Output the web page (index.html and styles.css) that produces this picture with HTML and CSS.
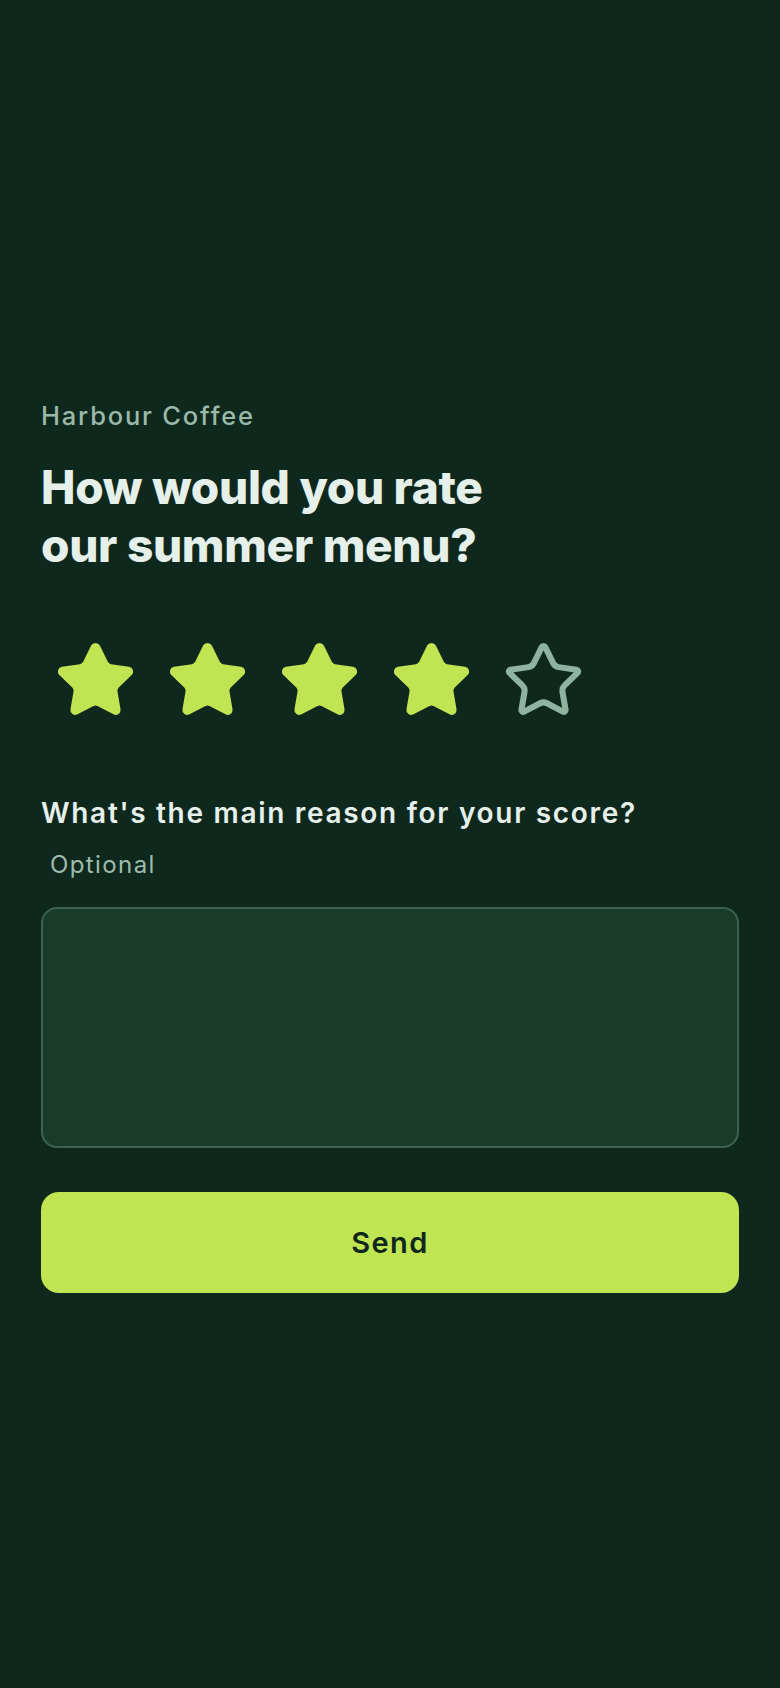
FILE: index.html
```html
<!DOCTYPE html>
<html lang="en">
<head>
<meta charset="utf-8">
<meta name="viewport" content="width=device-width, initial-scale=1">
<title>Harbour Coffee – Rate our summer menu</title>
<link rel="stylesheet" href="styles.css">
</head>
<body>
<main class="screen">
  <section class="survey">
    <p class="brand">Harbour Coffee</p>
    <h1 class="question">How would you rate<br>our summer menu?</h1>

    <div class="stars" role="radiogroup" aria-label="Rating">
      <button class="star is-on" aria-label="1 star"><svg viewBox="0 0 24 24"><path d="M11.525 2.295a.53.53 0 0 1 .95 0l2.31 4.679a2.123 2.123 0 0 0 1.595 1.16l5.166.756a.53.53 0 0 1 .294.904l-3.736 3.638a2.123 2.123 0 0 0-.611 1.878l.882 5.14a.53.53 0 0 1-.771.56l-4.618-2.428a2.122 2.122 0 0 0-1.973 0L6.396 21.01a.53.53 0 0 1-.77-.56l.881-5.139a2.122 2.122 0 0 0-.611-1.879L2.16 9.795a.53.53 0 0 1 .294-.906l5.165-.755a2.122 2.122 0 0 0 1.597-1.16z"/></svg></button>
      <button class="star is-on" aria-label="2 stars"><svg viewBox="0 0 24 24"><path d="M11.525 2.295a.53.53 0 0 1 .95 0l2.31 4.679a2.123 2.123 0 0 0 1.595 1.16l5.166.756a.53.53 0 0 1 .294.904l-3.736 3.638a2.123 2.123 0 0 0-.611 1.878l.882 5.14a.53.53 0 0 1-.771.56l-4.618-2.428a2.122 2.122 0 0 0-1.973 0L6.396 21.01a.53.53 0 0 1-.77-.56l.881-5.139a2.122 2.122 0 0 0-.611-1.879L2.16 9.795a.53.53 0 0 1 .294-.906l5.165-.755a2.122 2.122 0 0 0 1.597-1.16z"/></svg></button>
      <button class="star is-on" aria-label="3 stars"><svg viewBox="0 0 24 24"><path d="M11.525 2.295a.53.53 0 0 1 .95 0l2.31 4.679a2.123 2.123 0 0 0 1.595 1.16l5.166.756a.53.53 0 0 1 .294.904l-3.736 3.638a2.123 2.123 0 0 0-.611 1.878l.882 5.14a.53.53 0 0 1-.771.56l-4.618-2.428a2.122 2.122 0 0 0-1.973 0L6.396 21.01a.53.53 0 0 1-.77-.56l.881-5.139a2.122 2.122 0 0 0-.611-1.879L2.16 9.795a.53.53 0 0 1 .294-.906l5.165-.755a2.122 2.122 0 0 0 1.597-1.16z"/></svg></button>
      <button class="star is-on" aria-label="4 stars"><svg viewBox="0 0 24 24"><path d="M11.525 2.295a.53.53 0 0 1 .95 0l2.31 4.679a2.123 2.123 0 0 0 1.595 1.16l5.166.756a.53.53 0 0 1 .294.904l-3.736 3.638a2.123 2.123 0 0 0-.611 1.878l.882 5.14a.53.53 0 0 1-.771.56l-4.618-2.428a2.122 2.122 0 0 0-1.973 0L6.396 21.01a.53.53 0 0 1-.77-.56l.881-5.139a2.122 2.122 0 0 0-.611-1.879L2.16 9.795a.53.53 0 0 1 .294-.906l5.165-.755a2.122 2.122 0 0 0 1.597-1.16z"/></svg></button>
      <button class="star" aria-label="5 stars"><svg viewBox="0 0 24 24"><path d="M11.525 2.295a.53.53 0 0 1 .95 0l2.31 4.679a2.123 2.123 0 0 0 1.595 1.16l5.166.756a.53.53 0 0 1 .294.904l-3.736 3.638a2.123 2.123 0 0 0-.611 1.878l.882 5.14a.53.53 0 0 1-.771.56l-4.618-2.428a2.122 2.122 0 0 0-1.973 0L6.396 21.01a.53.53 0 0 1-.77-.56l.881-5.139a2.122 2.122 0 0 0-.611-1.879L2.16 9.795a.53.53 0 0 1 .294-.906l5.165-.755a2.122 2.122 0 0 0 1.597-1.16z"/></svg></button>
    </div>

    <label class="reason-label" for="reason">What's the main reason for your score?</label>
    <p class="hint">Optional</p>
    <textarea id="reason" class="reason"></textarea>

    <button class="send">Send</button>
  </section>
</main>
</body>
</html>
```

FILE: styles.css
```css
* { box-sizing: border-box; }

html, body {
  margin: 0;
  padding: 0;
  background: #0f281d;
}

body {
  font-family: Inter, "Noto Sans", "Liberation Sans", sans-serif;
  color: #e6f0ea;
}

.screen {
  min-height: 1688px;
  padding: 400px 41px 0 41px;
}

.survey {
  display: flex;
  flex-direction: column;
  width: 698px;
}

.brand {
  margin: 0;
  font-size: 25.5px;
  line-height: 32px;
  font-weight: 500;
  letter-spacing: 1.8px;
  color: #9bb9a9;
}

.question {
  margin: 26px 0 0 0;
  font-size: 46px;
  line-height: 58px;
  font-weight: 800;
  letter-spacing: -0.3px;
  color: #e6f0ea;
}

.stars {
  display: flex;
  gap: 5px;
  margin-top: 53px;
  margin-left: 1px;
}

.star {
  display: flex;
  padding: 12px;
  border: 0;
  background: none;
  cursor: pointer;
}

.star svg {
  width: 83px;
  height: 83px;
  display: block;
  fill: none;
  stroke: #8fb2a1;
  stroke-width: 1.75;
  stroke-linejoin: round;
  stroke-linecap: round;
}

.star.is-on svg {
  fill: #c0e553;
  stroke: #c0e553;
}

.reason-label {
  margin-top: 61px;
  font-size: 28px;
  line-height: 36px;
  font-weight: 600;
  letter-spacing: 1.7px;
  color: #e6f0ea;
}

.hint {
  margin: 19px 0 0 0;
  padding-left: 9px;
  font-size: 24px;
  line-height: 30px;
  font-weight: 400;
  letter-spacing: 1.4px;
  color: #9fbcac;
}

.reason {
  margin-top: 27px;
  width: 698px;
  height: 241px;
  padding: 18px;
  border: 2px solid #3d6250;
  border-radius: 16px;
  background: #1a3a2a;
  color: #e6f0ea;
  font: 24px/1.4 Inter, "Noto Sans", sans-serif;
  resize: none;
  outline: none;
}

.send {
  margin-top: 44px;
  height: 101px;
  border: 0;
  border-radius: 18px;
  background: #c0e553;
  color: #10281c;
  font-family: Inter, "Noto Sans", "Liberation Sans", sans-serif;
  font-size: 29px;
  font-weight: 600;
  letter-spacing: 1.4px;
  cursor: pointer;
}
```
